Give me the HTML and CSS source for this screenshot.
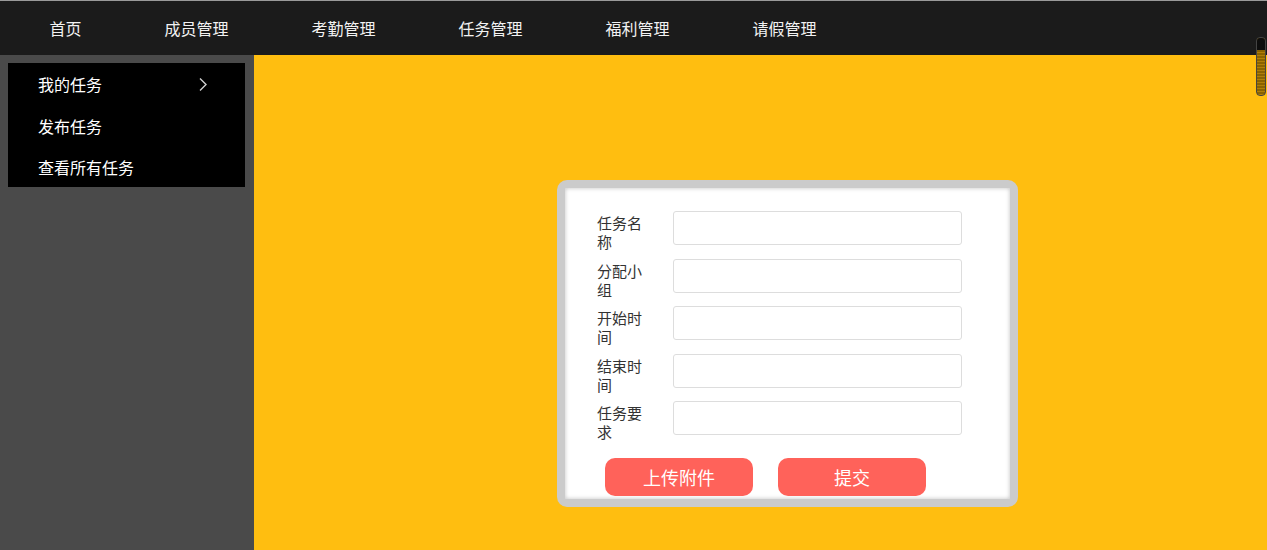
FILE: index.html
```html
<!DOCTYPE html>
<html lang="zh-CN">
<head>
    <meta charset="UTF-8">
    <title>任务管理</title>
    <link rel="stylesheet" href="styles.css">
</head>
<body>
    <div class="header">
        <ul class="nav">
            <li>首页</li>
            <li>成员管理</li>
            <li>考勤管理</li>
            <li>任务管理</li>
            <li>福利管理</li>
            <li>请假管理</li>
        </ul>
    </div>
    <div class="content">
        <div class="sidebar">
            <ul class="menu">
                <li>我的任务
                    <svg class="arrow" width="10" height="15" viewBox="0 0 10 15"><polyline points="2,1.5 8,7.5 2,13.5" fill="none" stroke="#d0d0d0" stroke-width="1.4"/></svg>
                </li>
                <li>发布任务</li>
                <li>查看所有任务</li>
            </ul>
        </div>
        <div class="main">
            <div class="card">
                <form class="task-form">
                    <div class="row"><label>任务名称</label><input type="text"></div>
                    <div class="row"><label>分配小组</label><input type="text"></div>
                    <div class="row"><label>开始时间</label><input type="text"></div>
                    <div class="row"><label>结束时间</label><input type="text"></div>
                    <div class="row"><label>任务要求</label><input type="text"></div>
                    <div class="buttons">
                        <button type="button" class="btn">上传附件</button>
                        <button type="button" class="btn">提交</button>
                    </div>
                </form>
            </div>
        </div>
    </div>
    <div class="scroll-thumb"><div class="thumb-top"></div></div>
</body>
</html>
```

FILE: styles.css
```css
body {
    margin: 0;
    font-family: "Noto Sans CJK SC", "Noto Sans", sans-serif;
    height: 550px;
    overflow: hidden;
    display: flex;
    flex-direction: column;
}

.header {
    background: #1b1b1b;
    border-top: 1px solid #9a9a9a;
    height: 54px;
}

.nav {
    list-style: none;
    margin: 0;
    padding: 0 0 0 8px;
    display: flex;
    height: 100%;
    align-items: center;
}

.nav li {
    color: #f2f2f2;
    font-size: 16px;
    padding: 0 41.5px;
    line-height: 20px;
    white-space: nowrap;
}

.content {
    flex: 1;
    display: flex;
}

.sidebar {
    width: 246px;
    background: #4a4a4a;
    padding: 8px 0 0 8px;
}

.menu {
    list-style: none;
    margin: 0;
    padding: 1px 0 0;
    background: #000;
    width: 237px;
    height: 123px;
}

.menu li {
    color: #fff;
    font-size: 16px;
    height: 41.5px;
    line-height: 41px;
    padding-left: 30px;
    display: flex;
    align-items: center;
}

.arrow {
    margin-left: auto;
    margin-right: 37px;
}

.main {
    flex: 1;
    background: #ffbe10;
    padding: 125px 0 0 303px;
}

.card {
    width: 445px;
    border: 8px solid #cbcbcb;
    border-radius: 10px;
    background: #fff;
    box-shadow: inset 0 0 4px rgba(0, 0, 0, 0.25);
}

.task-form {
    padding: 23px 0 3px 32px;
}

.row {
    display: flex;
    align-items: flex-start;
    height: 34px;
    margin-bottom: 13.5px;
}

.row label {
    width: 48px;
    margin-right: 28px;
    font-size: 15px;
    line-height: 19px;
    color: #333;
    padding-top: 2px;
}

.row input {
    width: 289px;
    height: 34px;
    box-sizing: border-box;
    border: 1px solid #ddd;
    border-radius: 3px;
    margin: 0;
}

.buttons {
    display: flex;
    gap: 25px;
    padding: 9px 0 0 8px;
}

.btn {
    width: 148px;
    height: 38px;
    border: none;
    border-radius: 10px;
    background: #ff625a;
    color: #fff;
    font-family: inherit;
    font-size: 18px;
}

.scroll-thumb {
    position: absolute;
    left: 1256px;
    top: 37px;
    width: 8px;
    height: 57px;
    border: 1px solid #444;
    border-radius: 4px;
    background: repeating-linear-gradient(to bottom, #8a6300 0, #8a6300 2px, #b07e08 2px, #b07e08 3px);
    overflow: hidden;
}

.thumb-top {
    height: 12px;
    background: #0d0d0d;
}
```
